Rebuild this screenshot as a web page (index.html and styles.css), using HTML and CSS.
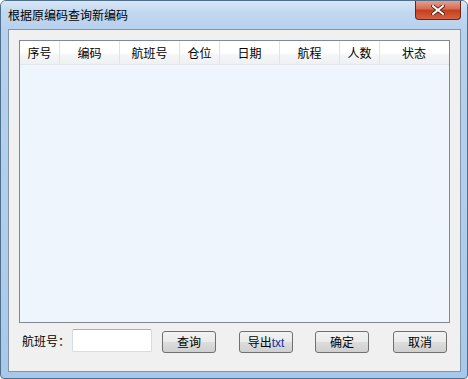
FILE: index.html
```html
<!DOCTYPE html>
<html lang="zh-CN">
<head>
    <meta charset="UTF-8">
    <title>根据原编码查询新编码</title>
    <link rel="stylesheet" href="styles.css">
</head>
<body>
    <div class="window">
        <div class="titlebar">
            <span class="title">根据原编码查询新编码</span>
            <button class="close-btn">
                <svg width="14" height="10" viewBox="0 0 14 10">
                    <path d="M2 1 L12 9 M12 1 L2 9" stroke="#4a1a12" stroke-width="3.6" stroke-linecap="square"/>
                    <path d="M2 1 L12 9 M12 1 L2 9" stroke="#ffffff" stroke-width="2" stroke-linecap="square"/>
                </svg>
            </button>
        </div>
        <div class="client">
            <div class="list">
                <div class="list-header">
                    <div class="col c1">序号</div>
                    <div class="col c2">编码</div>
                    <div class="col c3">航班号</div>
                    <div class="col c4">仓位</div>
                    <div class="col c5">日期</div>
                    <div class="col c6">航程</div>
                    <div class="col c7">人数</div>
                    <div class="col c8">状态</div>
                </div>
                <div class="list-body"></div>
            </div>
            <div class="toolbar">
                <label class="field-label">航班号：</label>
                <input type="text" class="field">
                <button class="btn btn-query">查询</button>
                <button class="btn btn-export">导出<span class="latin">txt</span></button>
                <button class="btn btn-ok">确定</button>
                <button class="btn btn-cancel">取消</button>
            </div>
        </div>
    </div>
</body>
</html>
```

FILE: styles.css
```css
body {
    margin: 0;
    padding: 0;
    background: #ffffff;
    font-family: "Noto Sans CJK SC", "Liberation Sans", sans-serif;
    font-size: 12px;
    color: #000;
}
.window {
    width: 468px;
    height: 379px;
    box-sizing: border-box;
    border: 1px solid #4f6f8f;
    border-radius: 6px 6px 4px 4px;
    background: linear-gradient(180deg, #c9dcf0 0%, #b8d1ec 8%, #b1cdeb 60%, #a9c8e9 100%);
    display: flex;
    flex-direction: column;
    overflow: hidden;
}
.titlebar {
    height: 28px;
    display: flex;
    align-items: flex-start;
    justify-content: space-between;
    padding-left: 7px;
    padding-right: 6px;
    background: linear-gradient(180deg, #d7e6f6 0%, #c2d8f0 40%, #b7d1ee 100%);
}
.title {
    margin-top: 6px;
    line-height: 16px;
    font-size: 12px;
    color: #000;
}
.close-btn {
    width: 46px;
    height: 20px;
    margin-top: -1px;
    border: 1px solid #6b2418;
    border-top: none;
    border-radius: 0 0 4px 4px;
    background: linear-gradient(180deg, #e8a593 0%, #d66e55 45%, #c4401f 55%, #d8613f 100%);
    display: flex;
    align-items: center;
    justify-content: center;
    padding: 0;
}
.client {
    height: 343px;
    margin: 0 6px 0 7px;
    box-sizing: border-box;
    border: 1px solid #8196ab;
    background: #f0f0f0;
    padding: 10px 10px 0 10px;
    display: flex;
    flex-direction: column;
}
.list {
    height: 283px;
    box-sizing: border-box;
    border: 1px solid #828790;
    background: #eff5fd;
    display: flex;
    flex-direction: column;
}
.list-header {
    height: 23px;
    display: flex;
    background: linear-gradient(180deg, #ffffff 0%, #ffffff 50%, #f5f6f7 60%, #eef0f2 100%);
    border-bottom: 1px solid #e3e6ea;
}
.col {
    box-sizing: border-box;
    border-right: 1px solid #e0e3e7;
    text-align: center;
    line-height: 23px;
}
.c1 { width: 40px; }
.c2 { width: 60px; }
.c3 { width: 60px; }
.c4 { width: 40px; }
.c5 { width: 60px; }
.c6 { width: 60px; }
.c7 { width: 40px; }
.c8 { width: 68px; border-right: none; }
.list-body {
    flex: 1;
}
.toolbar {
    display: flex;
    align-items: center;
    margin-top: 6px;
    height: 23px;
}
.field-label {
    margin-left: 3px;
    width: 50px;
}
.field {
    width: 80px;
    height: 23px;
    box-sizing: border-box;
    border: 1px solid #d5dbe3;
    border-top-color: #abadb3;
    border-radius: 2px;
    background: #ffffff;
    margin: 0;
}
.btn {
    width: 54px;
    height: 22px;
    margin-top: 3px;
    box-sizing: border-box;
    border: 1px solid #707070;
    border-radius: 3px;
    background: linear-gradient(180deg, #f2f2f2 0%, #ebebeb 48%, #dddddd 52%, #cfcfcf 100%);
    font-family: "Noto Sans CJK SC", sans-serif;
    font-size: 12px;
    color: #000;
    padding: 0;
    line-height: 18px;
}
.btn-query { margin-left: 10px; }
.btn-export { margin-left: 23px; }
.btn-ok { margin-left: 22px; }
.btn-cancel { margin-left: 24px; }
.latin {
    font-family: "Liberation Sans", sans-serif;
    color: #1a2a9a;
}
```
